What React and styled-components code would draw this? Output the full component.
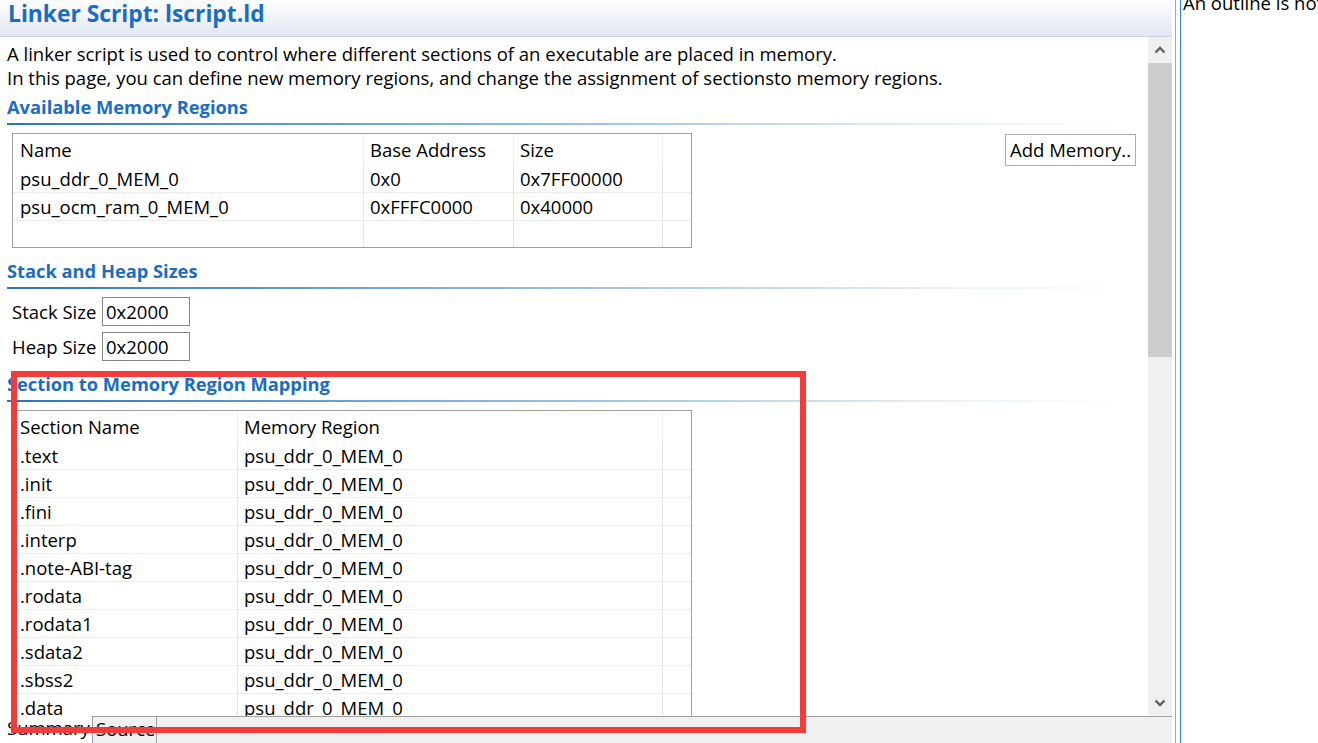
import React from "react";
import styled, { createGlobalStyle } from "styled-components";

const Global = createGlobalStyle`
  html, body { margin: 0; padding: 0; background: #fff; }
  body {
    font-family: "Open Sans", "Noto Sans CJK SC", sans-serif;
    font-size: 18.5px;
    color: #000;
  }
`;

const Root = styled.div`
  position: relative;
  width: 1318px;
  height: 743px;
  overflow: hidden;
  display: flex;
  background: #fff;
`;

const Editor = styled.div`
  width: 1172px;
  flex: none;
  display: flex;
  flex-direction: column;
`;

const Header = styled.div`
  height: 37px;
  box-sizing: border-box;
  border-bottom: 1px solid #c7d0dd;
  background: linear-gradient(#fdfdfe, #e2e8f2);
  padding: 0 0 0 8px;
`;

const Title = styled.h1`
  margin: 0;
  font-size: 22.8px;
  line-height: 28px;
  font-weight: 700;
  color: #1b6cc3;
  white-space: nowrap;
`;

const Body = styled.div`
  flex: 1;
  display: flex;
  min-height: 0;
`;

const Content = styled.div`
  flex: 1;
  overflow: hidden;
  padding: 5px 0 0 7px;
  display: flex;
  flex-direction: column;
`;

const Desc = styled.p`
  margin: 0;
  line-height: 24px;
  white-space: nowrap;
`;

const Section = styled.div`
  margin-top: ${(p) => p.$mt}px;
  display: flex;
  flex-direction: column;
`;

const SectionTitle = styled.h2`
  margin: 0;
  font-size: 18.3px;
  line-height: 24px;
  font-weight: 700;
  color: #1b6cc3;
  white-space: nowrap;
`;

const Rule = styled.div`
  height: 2px;
  margin: 4px 20px 0 0;
  background: linear-gradient(to right, #2d73bb 0%, #8db8df 45%, rgba(220, 233, 245, 0.6) 85%, rgba(255, 255, 255, 0) 100%);
`;

const TableRowArea = styled.div`
  display: flex;
  justify-content: space-between;
  align-items: flex-start;
  padding-right: 12px;
  margin-top: 8px;
`;

const TableBox = styled.div`
  width: 680px;
  height: ${(p) => p.$h}px;
  box-sizing: border-box;
  border: 1px solid #a0a0a0;
  margin-left: 5px;
  overflow: hidden;
  background: #fff;
  flex: none;
`;

const Row = styled.div`
  display: grid;
  grid-template-columns: ${(p) => p.$cols};
  height: ${(p) => p.$h}px;
  box-sizing: border-box;
  border-bottom: ${(p) => (p.$line ? "1px solid #ececec" : "none")};
`;

const Cell = styled.div`
  display: flex;
  align-items: center;
  padding-left: ${(p) => p.$pl ?? 6}px;
  border-right: 1px solid ${(p) => (p.$head ? "#eeeeee" : "#e4e4e4")};
  white-space: nowrap;
  overflow: hidden;
  line-height: 24px;
`;

const Filler = styled.div``;

const Button = styled.button`
  font: inherit;
  line-height: 24px;
  height: 32px;
  margin-top: 1px;
  padding: 0 4px;
  background: #fff;
  color: #000;
  border: 1px solid #adadad;
  border-radius: 0;
  white-space: nowrap;
`;

const FieldList = styled.div`
  display: flex;
  flex-direction: column;
  gap: 6px;
  margin-top: 8px;
  margin-left: 5px;
`;

const Field = styled.div`
  display: flex;
  align-items: center;
`;

const FieldLabel = styled.span`
  width: 90px;
  line-height: 24px;
  white-space: nowrap;
`;

const Input = styled.div`
  width: 88px;
  height: 29px;
  box-sizing: border-box;
  border: 1px solid #858585;
  padding-left: 3px;
  display: flex;
  align-items: center;
  line-height: 24px;
`;

const Scrollbar = styled.div`
  width: 24px;
  flex: none;
  background: #f0f0f0;
  display: flex;
  flex-direction: column;
`;

const ArrowBtn = styled.div`
  height: 26px;
  flex: none;
  display: flex;
  align-items: center;
  justify-content: center;
`;

const Thumb = styled.div`
  height: 294px;
  flex: none;
  background: #cdcdcd;
`;

const Track = styled.div`
  flex: 1;
`;

const TabBar = styled.div`
  height: 27px;
  flex: none;
  display: flex;
  background: #f0f0f0;
`;

const Tab = styled.div`
  box-sizing: border-box;
  width: ${(p) => p.$w}px;
  flex: none;
  background: ${(p) => (p.$active ? "#fff" : "#f0f0f0")};
  border-top: ${(p) => (p.$active ? "none" : "1px solid #a0a0a0")};
  border-left: ${(p) => (p.$active ? "none" : "1px solid #a0a0a0")};
  border-right: ${(p) => (p.$active ? "none" : "1px solid #a0a0a0")};
  padding-left: ${(p) => (p.$active ? 7 : 3)}px;
  line-height: 24px;
  white-space: nowrap;
`;

const TabRest = styled.div`
  flex: 1;
  border-top: 1px solid #a0a0a0;
`;

const Sash = styled.div`
  width: 9px;
  flex: none;
  box-sizing: border-box;
  border-right: 1px solid #2b86cc;
  &::before {
    content: "";
    display: block;
    margin-left: 3px;
    width: 1px;
    height: 100%;
    background: #6fcb74;
  }
`;

const Outline = styled.div`
  flex: 1;
  overflow: hidden;
  padding-left: 2px;
  white-space: nowrap;
  line-height: 24px;
  margin-top: -9px;
`;

const Annotation = styled.div`
  position: absolute;
  left: 11px;
  top: 371px;
  width: 795px;
  height: 362px;
  box-sizing: border-box;
  border: 6px solid #f43b3b;
  pointer-events: none;
`;

const Chevron = ({ down }) => (
  <svg width="12" height="8" viewBox="0 0 12 8">
    <polyline
      points={down ? "1.5,1.5 6,6 10.5,1.5" : "1.5,6.5 6,2 10.5,6.5"}
      fill="none"
      stroke="#5f5f5f"
      strokeWidth="2.4"
    />
  </svg>
);

const memCols = "351px 150px 149px 1fr";
const memRows = [
  ["psu_ddr_0_MEM_0", "0x0", "0x7FF00000"],
  ["psu_ocm_ram_0_MEM_0", "0xFFFC0000", "0x40000"],
];

const mapCols = "225px 425px 1fr";
const sections = [
  ".text",
  ".init",
  ".fini",
  ".interp",
  ".note-ABI-tag",
  ".rodata",
  ".rodata1",
  ".sdata2",
  ".sbss2",
  ".data",
  ".data1",
];

export default function App() {
  return (
    <>
      <Global />
      <Root>
        <Editor>
          <Header>
            <Title>Linker Script: lscript.ld</Title>
          </Header>
          <Body>
            <Content>
              <Desc>
                A linker script is used to control where different sections of an executable are placed in memory.
                <br />
                In this page, you can define new memory regions, and change the assignment of sectionsto memory regions.
              </Desc>

              <Section $mt={5}>
                <SectionTitle>Available Memory Regions</SectionTitle>
                <Rule />
              </Section>
              <TableRowArea>
                <TableBox $h={115}>
                  <Row $cols={memCols} $h={31}>
                    <Cell $head $pl={7}>Name</Cell>
                    <Cell $head>Base Address</Cell>
                    <Cell $head>Size</Cell>
                    <Filler />
                  </Row>
                  {memRows.map((r) => (
                    <Row key={r[0]} $cols={memCols} $h={28} $line>
                      <Cell $pl={7}>{r[0]}</Cell>
                      <Cell>{r[1]}</Cell>
                      <Cell>{r[2]}</Cell>
                      <Filler />
                    </Row>
                  ))}
                  <Row $cols={memCols} $h={26}>
                    <Cell />
                    <Cell />
                    <Cell />
                    <Filler />
                  </Row>
                </TableBox>
                <Button>Add Memory..</Button>
              </TableRowArea>

              <Section $mt={11}>
                <SectionTitle>Stack and Heap Sizes</SectionTitle>
                <Rule />
              </Section>
              <FieldList>
                <Field>
                  <FieldLabel>Stack Size</FieldLabel>
                  <Input>0x2000</Input>
                </Field>
                <Field>
                  <FieldLabel>Heap Size</FieldLabel>
                  <Input>0x2000</Input>
                </Field>
              </FieldList>

              <Section $mt={11}>
                <SectionTitle>Section to Memory Region Mapping</SectionTitle>
                <Rule />
              </Section>
              <TableRowArea>
                <TableBox $h={400}>
                  <Row $cols={mapCols} $h={31}>
                    <Cell $head $pl={7}>Section Name</Cell>
                    <Cell $head>Memory Region</Cell>
                    <Filler />
                  </Row>
                  {sections.map((s) => (
                    <Row key={s} $cols={mapCols} $h={28} $line>
                      <Cell $pl={7}>{s}</Cell>
                      <Cell>psu_ddr_0_MEM_0</Cell>
                      <Filler />
                    </Row>
                  ))}
                </TableBox>
              </TableRowArea>
            </Content>
            <Scrollbar>
              <ArrowBtn>
                <Chevron />
              </ArrowBtn>
              <Thumb />
              <Track />
              <ArrowBtn>
                <Chevron down />
              </ArrowBtn>
            </Scrollbar>
          </Body>
          <TabBar>
            <Tab $active $w={92}>Summary</Tab>
            <Tab $w={65}>Source</Tab>
            <TabRest />
          </TabBar>
        </Editor>
        <Sash />
        <Outline>An outline is not available.</Outline>
        <Annotation />
      </Root>
    </>
  );
}
